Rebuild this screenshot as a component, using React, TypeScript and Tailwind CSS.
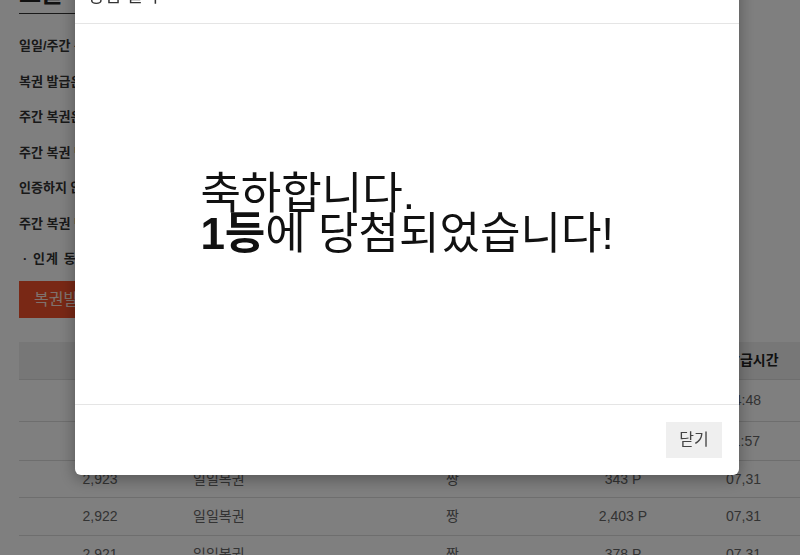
import React from 'react';

const font = "font-['Liberation_Sans','Noto_Sans_CJK_KR',sans-serif]";

const notices = [
  '일일/주간 복권은 매일 오전 7시에 발급됩니다.',
  '복권 발급은 하루에 한 번만 가능합니다.',
  '주간 복권은 일일 복권 7장을 모으면 발급됩니다.',
  '주간 복권 당첨 포인트는 즉시 지급됩니다.',
  '인증하지 않은 회원은 복권을 발급받을 수 없습니다.',
  '주간 복권 당첨 내역은 아래에서 확인할 수 있습니다.',
];

const rows = [
  { no: '2,925', kind: '일일복권', rank: '짱', point: '1,210 P', time: '14:48', h: 'h-[42px]' },
  { no: '2,924', kind: '일일복권', rank: '짱', point: '512 P', time: '11:57', h: 'h-[39px]' },
  { no: '2,923', kind: '일일복권', rank: '짱', point: '343 P', time: '07,31', h: 'h-[37px]' },
  { no: '2,922', kind: '일일복권', rank: '짱', point: '2,403 P', time: '07,31', h: 'h-[38px]' },
  { no: '2,921', kind: '일일복권', rank: '짱', point: '378 P', time: '07,31', h: 'h-[38px]' },
];

function LotteryPage() {
  return (
    <div className={`min-h-[555px] bg-white pl-[19px] ${font} overflow-hidden`}>
      {/* title block, scrolled slightly out of view */}
      <div className="-mt-[22px] w-[300px] border-b border-[#333] pb-[4px] text-[24px] font-bold leading-[31px] text-[#222]">
        오늘의 복권
      </div>

      <ul className="mt-[14px] flex flex-col">
        {notices.map((n) => (
          <li key={n} className="h-[35.5px] whitespace-nowrap text-[13px] font-bold leading-[36px] text-[#333]">
            {n}
          </li>
        ))}
        <li className="h-[35px] whitespace-nowrap pl-[4px] text-[13px] font-bold leading-[36px] tracking-[0.08em] text-[#333]">
          · 인계 동의 후 발급받을 수 있습니다.
        </li>
      </ul>

      <button className="mt-[5px] h-[37px] w-[140px] bg-[#f2502a] pl-[15px] text-left text-[16px] text-[#ffe5dc]">
        복권발급
      </button>

      <div className="mt-[24px]">
        <div className="grid h-[38px] grid-cols-[162px_200px_142px_200px_1fr] items-center border-b border-[#ddd] bg-[#efefef] text-[14px] font-bold text-[#222]">
          <div className="text-center">번호</div>
          <div className="pl-[12px]">종류</div>
          <div className="text-center">등수</div>
          <div className="text-center">포인트</div>
          <div className="pl-[4px]">발급시간</div>
        </div>
        {rows.map((r) => (
          <div
            key={r.no}
            className={`grid grid-cols-[162px_200px_142px_200px_1fr] items-center border-b border-[#ddd] text-[14px] text-[#666] ${r.h}`}
          >
            <div className="text-center">{r.no}</div>
            <div className="pl-[12px]">{r.kind}</div>
            <div className="pl-[65px]">{r.rank}</div>
            <div className="text-center">{r.point}</div>
            <div className="pl-[3px]">{r.time}</div>
          </div>
        ))}
      </div>
    </div>
  );
}

function WinModal() {
  return (
    <div className={`fixed inset-0 bg-black/50 ${font}`}>
      <div className="ml-[75px] -mt-[30px] w-[664px] rounded-[6px] bg-white shadow-[0_4px_16px_rgba(0,0,0,0.35)]">
        <div className="flex h-[54px] items-center border-b border-[#e5e5e5] px-[13px] text-[18px] text-[#333]">
          당첨 결과
        </div>
        <div className="flex h-[380px] items-center justify-center">
          <p className="text-left text-[44px] leading-[40px] text-[#111]">
            축하합니다.
            <br />
            <b>1등</b>에 당첨되었습니다!
          </p>
        </div>
        <div className="flex h-[71px] items-center justify-end border-t border-[#e5e5e5] pr-[17px]">
          <button className="h-[36px] w-[56px] bg-[#efefef] text-[16px] text-[#444]">닫기</button>
        </div>
      </div>
    </div>
  );
}

export default function App() {
  return (
    <div className="relative h-[555px] overflow-hidden">
      <LotteryPage />
      <WinModal />
    </div>
  );
}
